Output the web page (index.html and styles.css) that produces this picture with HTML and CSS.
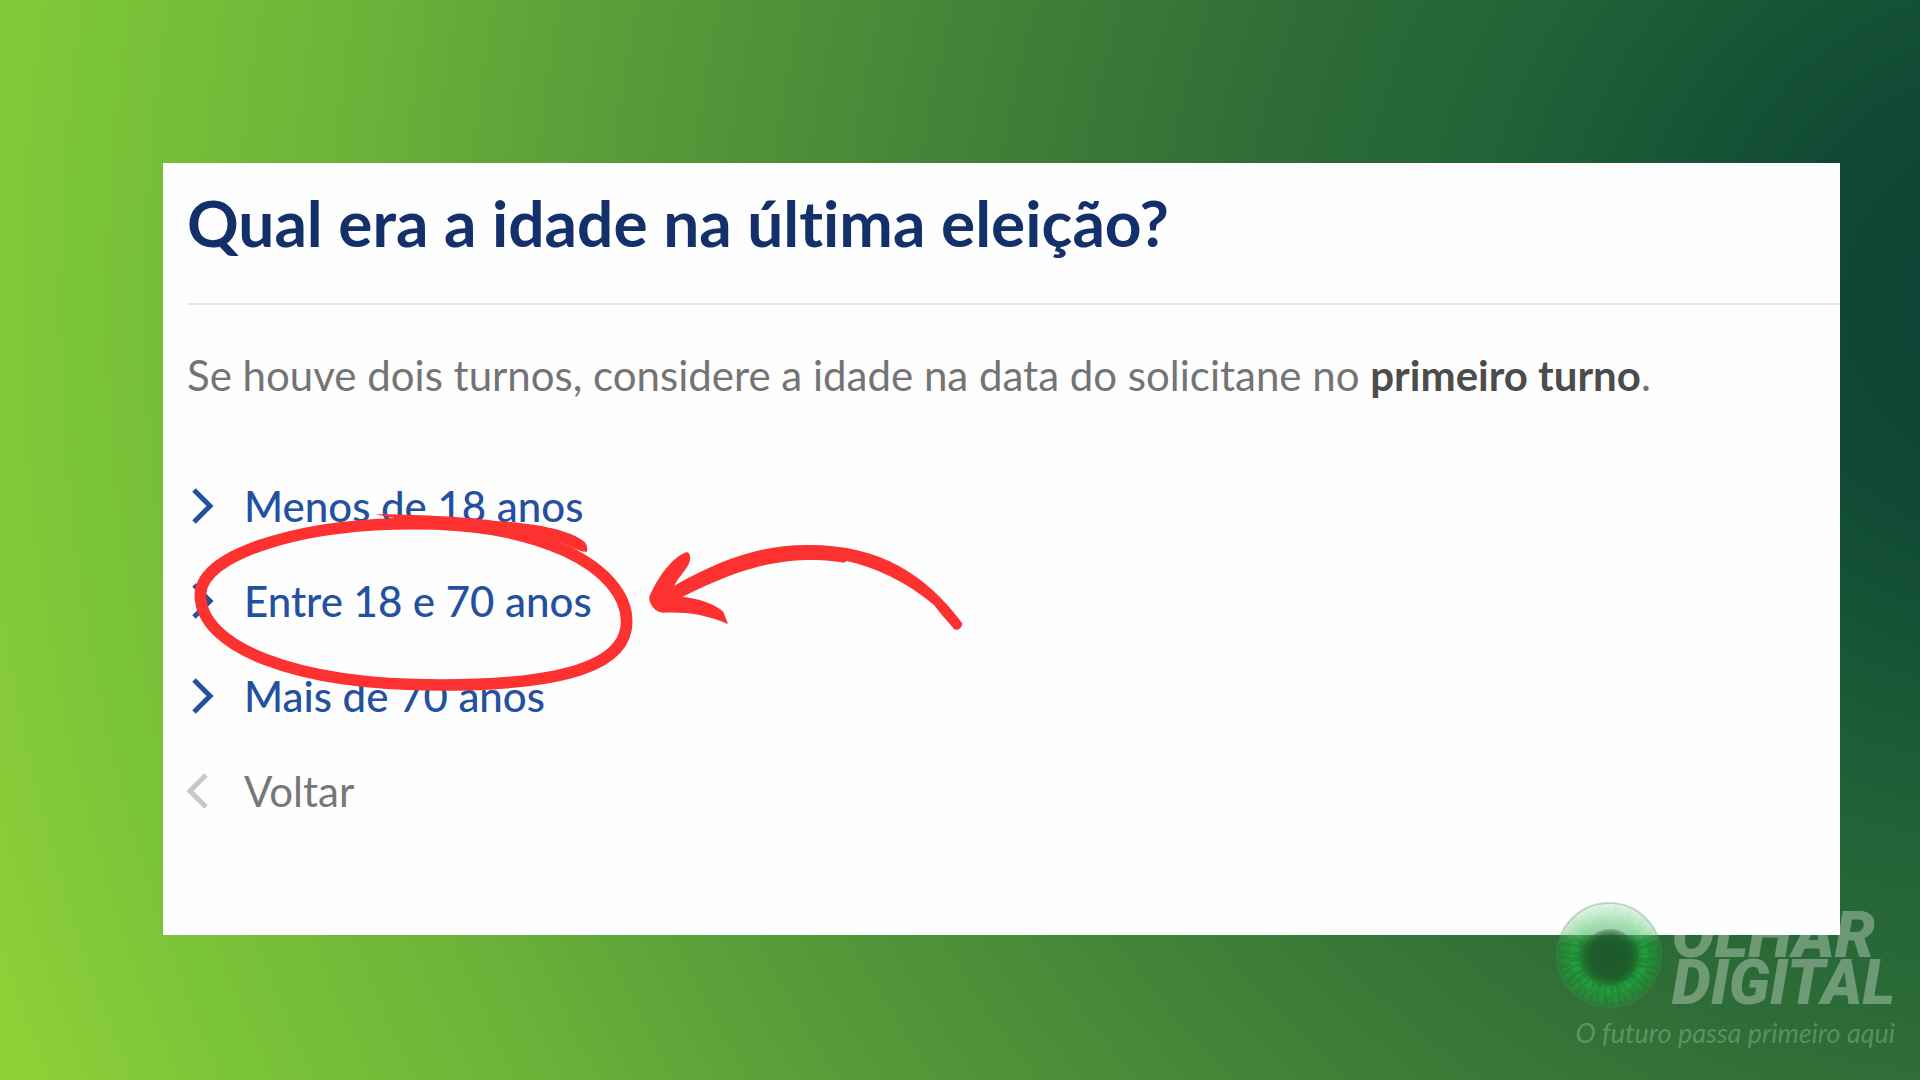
FILE: index.html
```html
<!DOCTYPE html>
<html lang="pt-BR">
  <head>
    <meta charset="utf-8">
    <title>Qual era a idade na última eleição?</title>
    <link rel="stylesheet" href="styles.css">
  </head>
  <body>
    <main class="panel">
      <h1 class="title">Qual era a idade na última eleição?</h1>
      <p class="hint">Se houve dois turnos, considere a idade na data do solicitane no <strong>primeiro turno</strong>.</p>
      <nav class="options">
        <a class="option" href="#menos-18">
          <svg class="chevron" viewBox="0 0 30 36"><path d="M7 2 L23 18 L7 34"/></svg>
          Menos de 18 anos
        </a>
        <a class="option" href="#entre-18-70">
          <svg class="chevron" viewBox="0 0 30 36"><path d="M7 2 L23 18 L7 34"/></svg>
          Entre 18 e 70 anos
        </a>
        <a class="option" href="#mais-70">
          <svg class="chevron" viewBox="0 0 30 36"><path d="M7 2 L23 18 L7 34"/></svg>
          Mais de 70 anos
        </a>
        <a class="option back" href="#voltar">
          <svg class="chevron" viewBox="0 0 30 36"><path d="M19 2 L3 18 L19 34"/></svg>
          Voltar
        </a>
        <!-- hand-drawn circle and arrow over the second option -->
        <svg class="marker" viewBox="90 90 2340 555">
          <path class="loop" d="M700 132 C420 140 124 220 121 345 C122 500 400 615 840 615 C1230 615 1400 550 1400 425 C1400 270 1150 115 700 132 Z"/>
          <path class="ink" d="M645 103 C760 103 900 110 1000 122 C1110 130 1225 145 1275 187 Q1284 200 1281 215 C1260 218 1225 195 1180 180 L1176 186 L1220 215 C1100 165 960 145 850 148 L720 118 Z"/>
          <path class="ink" transform="translate(1380 120)" d="M88 230 C110 180 150 115 200 96 C214 100 212 120 205 135 C190 160 170 180 163 197 C300 120 420 73 570 75 C780 75 920 165 1027 310 C1025 328 1010 335 1000 325 C980 300 960 280 942 255 C860 185 760 140 680 123 L672 128 C640 122 600 120 560 120 C440 122 330 160 188 230 C240 236 290 255 310 275 L324 312 C270 290 220 275 130 278 C105 278 85 250 88 230 Z"/>
        </svg>
      </nav>
    </main>

    <div class="watermark">
      <div class="brand">
        <svg class="eye" viewBox="0 0 110 110">
          <defs>
            <radialGradient id="iris" cx="50%" cy="50%" r="50%">
              <stop offset="45%" stop-color="#0d7a26" stop-opacity="0.5"/>
              <stop offset="70%" stop-color="#12b03a" stop-opacity="0.5"/>
              <stop offset="100%" stop-color="#0f9a28" stop-opacity="0.25"/>
            </radialGradient>
            <radialGradient id="pupil" cx="50%" cy="50%" r="50%">
              <stop offset="0%" stop-color="#1f4f27" stop-opacity="0.85"/>
              <stop offset="75%" stop-color="#1d5a2b" stop-opacity="0.8"/>
              <stop offset="100%" stop-color="#1d6a2b" stop-opacity="0.3"/>
            </radialGradient>
            <linearGradient id="shine" x1="0" y1="0" x2="0" y2="1">
              <stop offset="0%" stop-color="#ffffff" stop-opacity="0.6"/>
              <stop offset="40%" stop-color="#ffffff" stop-opacity="0"/>
            </linearGradient>
          </defs>
          <circle cx="55" cy="55" r="52" fill="url(#iris)"/>
          <circle class="fibres" cx="55" cy="55" r="35"/>
          <circle class="fibres outer" cx="55" cy="55" r="45"/>
          <circle cx="55" cy="55" r="52" fill="url(#shine)"/>
          <circle class="rim" cx="55" cy="55" r="52"/>
          <circle cx="56" cy="57" r="28" fill="url(#pupil)"/>
        </svg>
        <div class="name">
          <div class="first">OLHAR</div>
          <div>DIGITAL</div>
        </div>
      </div>
      <div class="tagline">O futuro passa primeiro aqui</div>
    </div>
  </body>
</html>
```

FILE: styles.css
```css
* {
  box-sizing: border-box;
}
body {
  margin: 0;
  min-height: 100vh;
  padding: 163px 80px 0 163px;
  font-family: Lato, sans-serif;
  font-variant-ligatures: none;
  background: radial-gradient(2160px circle at 105% 28%, #0b4236 0%, #0f4835 10%, #1b5a36 20%, #236438 26%, #2d6c36 35%, #3c7d38 46%, #4b8f38 57%, #5a9f39 67%, #6db339 78%, #7cc438 90%, #86ca39 95%, #8dd336 100%);
}
.panel {
  padding: 20px 0 116px 24px;
  background: #fefefe;
}
.title {
  margin: 0;
  padding-bottom: 40px;
  border-bottom: 2px solid #e8e8e8;
  color: #13306b;
  font-size: 64px;
  font-weight: 700;
  line-height: 80px;
}
.hint {
  margin: 42px 0 75px;
  color: #747474;
  font-size: 42px;
  line-height: 56px;
}
.hint strong {
  color: #4c4c4c;
}
.options {
  position: relative;
  display: flex;
  flex-direction: column;
  align-items: flex-start;
  gap: 39px;
}
.option {
  display: flex;
  align-items: center;
  gap: 27px;
  color: #2450a0;
  font-size: 42px;
  font-weight: 500;
  line-height: 56px;
  text-decoration: none;
}
.chevron {
  width: 30px;
  height: 36px;
  fill: none;
  stroke: #2450a0;
  stroke-width: 5;
}
.back {
  color: #777;
  font-weight: 400;
}
.back .chevron {
  stroke: #c8c8c8;
}
.marker {
  position: absolute;
  top: 32px;
  left: 3px;
  width: 780px;
  height: 185px;
  pointer-events: none;
}
.loop {
  fill: none;
  stroke: #fe3131;
  stroke-width: 35;
}
.ink {
  fill: #fe3131;
}
.watermark {
  position: absolute;
  right: 25px;
  bottom: 29px;
  display: flex;
  flex-direction: column;
  align-items: flex-end;
  gap: 5px;
}
.brand {
  display: flex;
  align-items: center;
  gap: 8px;
}
.eye {
  width: 110px;
  height: 110px;
}
.fibres {
  fill: none;
  stroke: #3fd45a;
  stroke-opacity: 0.2;
  stroke-width: 9;
  stroke-dasharray: 3 5 2 3 5 2;
}
.outer {
  stroke-dasharray: 2 4 5 3;
  stroke-opacity: 0.12;
}
.rim {
  fill: none;
  stroke: #4e8a5a;
  stroke-opacity: 0.3;
  stroke-width: 2;
}
.name {
  padding-top: 8px;
  color: rgba(255, 255, 255, 0.32);
  font-family: Roboto, sans-serif;
  font-size: 62px;
  font-style: italic;
  font-weight: 900;
  line-height: 47px;
}
.first {
  font-size: 64px;
}
.tagline {
  color: rgba(255, 255, 255, 0.24);
  font-size: 27px;
  font-style: italic;
  line-height: 36px;
}
```
